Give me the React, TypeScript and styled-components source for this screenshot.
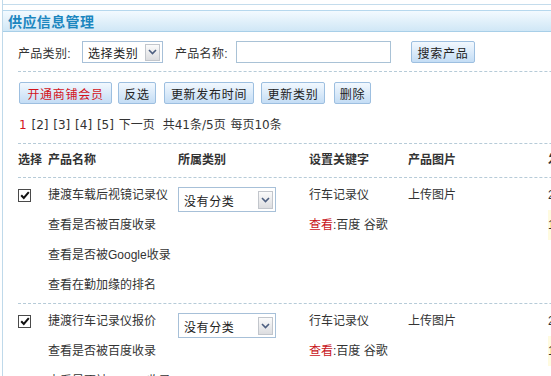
import React from "react";
import styled, { createGlobalStyle } from "styled-components";

const Global = createGlobalStyle`
  html, body { margin: 0; padding: 0; background: #fff; overflow: hidden; }
  body {
    font-family: "Liberation Sans", "Noto Sans CJK SC", "Noto Sans", sans-serif;
    font-size: 12px;
    color: #333;
  }
`;

const Frame = styled.div`
  width: 760px;
  min-height: 376px;
  margin-left: 2px;
  border-left: 1px solid #bfd9ea;
`;

const TopStrip = styled.div`
  height: 4px;
  border-bottom: 1px solid #c4dcec;
  margin-bottom: 5px;
`;

const Header = styled.div`
  height: 20px;
  display: flex;
  align-items: center;
  padding-left: 5px;
  border-top: 1px solid #b6d8ee;
  border-bottom: 1px solid #a8cfe8;
  background: linear-gradient(#f3faff, #d0e7f6);
`;

const Title = styled.span`
  font-size: 14px;
  font-weight: bold;
  color: #1b86bf;
  letter-spacing: 0.4px;
`;

const Body = styled.div`
  padding-left: 15px;
`;

const SearchRow = styled.div`
  margin-top: 9px;
  height: 22px;
  padding-bottom: 8px;
  border-bottom: 1px dashed #b6cbd8;
  display: flex;
  align-items: center;
`;

const Label = styled.span<{ $w: number }>`
  width: ${(p) => p.$w}px;
  flex-shrink: 0;
  color: #333;
  letter-spacing: 0.3px;
`;

const SelectBox = styled.div<{ $w: number; $h: number; $mr?: number }>`
  box-sizing: border-box;
  width: ${(p) => p.$w}px;
  height: ${(p) => p.$h}px;
  margin-right: ${(p) => p.$mr ?? 0}px;
  border: 1px solid #a7c0d8;
  background: #fff;
  display: flex;
  align-items: center;
  justify-content: space-between;
  padding: 0 2px 0 5px;
  flex-shrink: 0;
`;

const SelectText = styled.span<{ $dy?: number }>`
  color: #222;
  position: relative;
  top: ${(p) => p.$dy ?? 0}px;
  letter-spacing: 0.6px;
`;

const Arrow = styled.span<{ $h: number }>`
  box-sizing: border-box;
  width: 15px;
  height: ${(p) => p.$h}px;
  border: 1px solid #c2c6cc;
  background: linear-gradient(#fbfbfb, #dcdde0);
  display: flex;
  align-items: center;
  justify-content: center;
`;

const TextInput = styled.div`
  box-sizing: border-box;
  width: 155px;
  height: 22px;
  border: 1px solid #a9c2d6;
  background: #fff;
  margin-right: 20px;
  flex-shrink: 0;
`;

const Btn = styled.button<{ $danger?: boolean; $w: number; $mr?: number }>`
  box-sizing: border-box;
  width: ${(p) => p.$w}px;
  height: 22px;
  margin: 0 ${(p) => p.$mr ?? 0}px 0 0;
  padding: 0;
  border: 1px solid #9dbfe0;
  border-radius: 2px;
  background: linear-gradient(#f2f8fe, #c4ddf5);
  font-family: "Liberation Sans", "Noto Sans CJK SC", sans-serif;
  font-size: 12px;
  letter-spacing: 0.7px;
  color: ${(p) => (p.$danger ? "#d3141c" : "#222")};
  flex-shrink: 0;
`;

const ToolSection = styled.div`
  border-bottom: 1px dashed #b6cbd8;
  padding-bottom: 10px;
`;

const ButtonRow = styled.div`
  margin-top: 10px;
  margin-left: 1px;
  display: flex;
  align-items: center;
`;

const Pager = styled.div`
  margin-top: 13px;
  height: 16px;
  line-height: 16px;
  margin-left: 1px;
  font-family: "DejaVu Sans", "Noto Sans CJK SC", sans-serif;
  color: #333;
  word-spacing: 1px;
`;

const Current = styled.span`
  color: #d3141c;
`;

const PagerGap = styled.span`
  margin-left: 8px;
`;

const COLS = "30px 130px 131px 99px 140px 120px";

const HeadRow = styled.div`
  display: grid;
  grid-template-columns: ${COLS};
  height: 34px;
  box-sizing: border-box;
  padding-top: 8px;
  line-height: 16px;
  border-bottom: 1px dashed #b6cbd8;
  font-weight: bold;
  color: #333;
`;

const Row = styled.div`
  display: grid;
  grid-template-columns: ${COLS};
  padding: 2px 0 3px;
  border-bottom: 1px dashed #b6cbd8;
`;

const Cell = styled.div`
  display: flex;
  flex-direction: column;
`;

const Line = styled.div<{ $hl?: boolean }>`
  height: 30px;
  line-height: 30px;
  white-space: nowrap;
  color: #333;
  ${(p) => (p.$hl ? "background: linear-gradient(90deg, #fffbe0, #fff);" : "")}
`;

const CheckBox = styled.span`
  box-sizing: border-box;
  width: 13px;
  height: 13px;
  margin-top: 9px;
  border: 1px solid #4a4a4a;
  background: #fff;
  display: flex;
  align-items: center;
  justify-content: center;
`;

const CellSelect = styled.div`
  margin-top: 7px;
`;

const Red = styled.span`
  color: #c8141b;
`;

const Chevron = () => (
  <svg width="9" height="6" viewBox="0 0 9 6">
    <path d="M1 1 L4.5 4.5 L8 1" fill="none" stroke="#4d5f80" strokeWidth="1.6" />
  </svg>
);

const Tick = () => (
  <svg width="10" height="9" viewBox="0 0 10 9">
    <path d="M1.2 4.2 L3.8 7 L8.8 1.2" fill="none" stroke="#111" strokeWidth="2" />
  </svg>
);

type Item = { name: string; keyword: string; extra: string[]; date: string; time: string };

const items: Item[] = [
  {
    name: "捷渡车载后视镜记录仪",
    keyword: "行车记录仪",
    extra: ["查看是否被百度收录", "查看是否被Google收录", "查看在勤加缘的排名"],
    date: "2012-05-18",
    time: "12:30:21",
  },
  {
    name: "捷渡行车记录仪报价",
    keyword: "行车记录仪",
    extra: ["查看是否被百度收录", "查看是否被Google收录", "查看在勤加缘的排名"],
    date: "2012-05-18",
    time: "12:28:45",
  },
];

export default function App() {
  return (
    <>
      <Global />
      <Frame>
        <TopStrip />
        <Header>
          <Title>供应信息管理</Title>
        </Header>
        <Body>
          <SearchRow>
            <Label $w={64}>产品类别:</Label>
            <SelectBox $w={81} $h={22} $mr={12}>
              <SelectText>选择类别</SelectText>
              <Arrow $h={17}>
                <Chevron />
              </Arrow>
            </SelectBox>
            <Label $w={61}>产品名称:</Label>
            <TextInput />
            <Btn $w={64}>搜索产品</Btn>
          </SearchRow>
          <ToolSection>
            <ButtonRow>
              <Btn $danger $w={93} $mr={6}>开通商铺会员</Btn>
              <Btn $w={38} $mr={8}>反选</Btn>
              <Btn $w={90} $mr={7}>更新发布时间</Btn>
              <Btn $w={64} $mr={9}>更新类别</Btn>
              <Btn $w={37}>删除</Btn>
            </ButtonRow>
            <Pager>
              <Current>1</Current> [2] [3] [4] [5] 下一页
              <PagerGap>共41条/5页 每页10条</PagerGap>
            </Pager>
          </ToolSection>
          <HeadRow>
            <span>选择</span>
            <span>产品名称</span>
            <span>所属类别</span>
            <span>设置关键字</span>
            <span>产品图片</span>
            <span>发布时间</span>
          </HeadRow>
          {items.map((it) => (
            <Row key={it.name}>
              <Cell>
                <CheckBox>
                  <Tick />
                </CheckBox>
              </Cell>
              <Cell>
                <Line>{it.name}</Line>
                {it.extra.map((e) => (
                  <Line key={e}>{e}</Line>
                ))}
              </Cell>
              <Cell>
                <CellSelect>
                  <SelectBox $w={98} $h={25}>
                    <SelectText $dy={1}>没有分类</SelectText>
                    <Arrow $h={18}>
                      <Chevron />
                    </Arrow>
                  </SelectBox>
                </CellSelect>
              </Cell>
              <Cell>
                <Line>{it.keyword}</Line>
                <Line>
                  <Red>查看</Red>:百度 谷歌
                </Line>
              </Cell>
              <Cell>
                <Line>上传图片</Line>
              </Cell>
              <Cell>
                <Line>{it.date}</Line>
                <Line $hl>{it.time}</Line>
              </Cell>
            </Row>
          ))}
        </Body>
      </Frame>
    </>
  );
}
